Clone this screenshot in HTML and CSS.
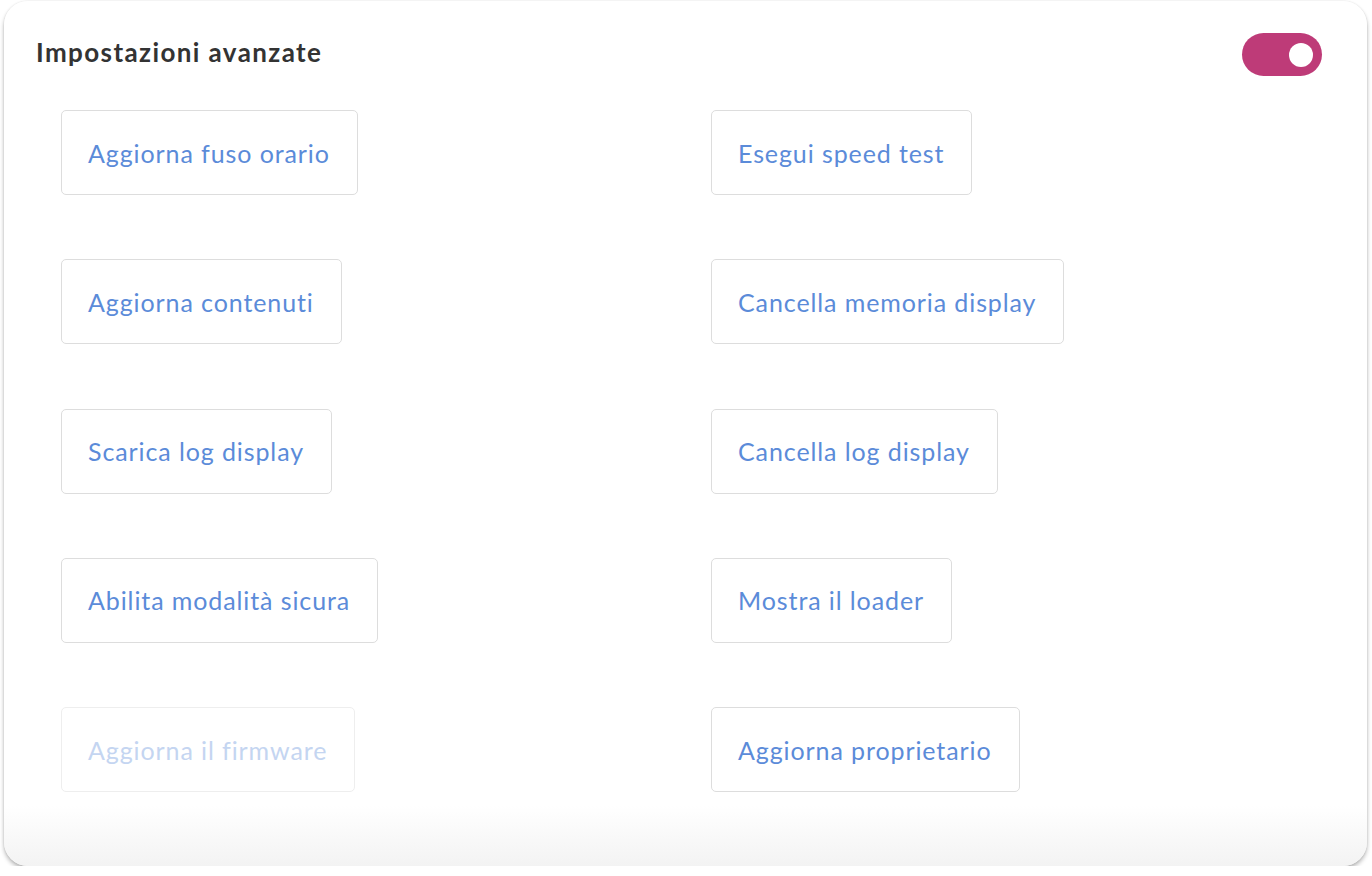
FILE: index.html
```html
<!DOCTYPE html>
<html lang="it">
<head>
<meta charset="utf-8">
<title>Impostazioni avanzate</title>
<link rel="stylesheet" href="styles.css">
</head>
<body>
<section class="card">
  <header class="card-header">
    <h2 class="title">Impostazioni avanzate</h2>
    <button class="toggle on" aria-label="Attiva"><span class="knob"></span></button>
  </header>
  <div class="actions">
    <div class="cell"><button class="action">Aggiorna fuso orario</button></div>
    <div class="cell"><button class="action">Esegui speed test</button></div>
    <div class="cell"><button class="action">Aggiorna contenuti</button></div>
    <div class="cell"><button class="action">Cancella memoria display</button></div>
    <div class="cell"><button class="action">Scarica log display</button></div>
    <div class="cell"><button class="action">Cancella log display</button></div>
    <div class="cell"><button class="action">Abilita modalità sicura</button></div>
    <div class="cell"><button class="action">Mostra il loader</button></div>
    <div class="cell"><button class="action disabled" disabled>Aggiorna il firmware</button></div>
    <div class="cell"><button class="action">Aggiorna proprietario</button></div>
  </div>
</section>
</body>
</html>
```
FILE: styles.css
```css
html, body {
  margin: 0;
  padding: 0;
  background: #ffffff;
}
body {
  font-family: "Lato", "Liberation Sans", sans-serif;
  padding: 1px 5px 0 4px;
}
.card {
  height: 865px;
  box-sizing: border-box;
  border-radius: 24px;
  background: linear-gradient(to bottom, #ffffff 0%, #ffffff 93%, #f3f3f3 100%);
  box-shadow: 0 3px 4px rgba(0, 0, 0, 0.28), 0 0 2px rgba(0, 0, 0, 0.12);
  padding: 32px 45px 0 32px;
}
.card-header {
  display: flex;
  justify-content: space-between;
  align-items: center;
  height: 43px;
}
.title {
  margin: 0;
  font-size: 26px;
  font-weight: 700;
  color: #333333;
  letter-spacing: 1.4px;
  line-height: 1;
  position: relative;
  top: -3px;
}
.toggle {
  width: 80px;
  height: 43px;
  border: none;
  border-radius: 22px;
  background: #be3b78;
  padding: 0 9px 0 0;
  display: flex;
  justify-content: flex-end;
  align-items: center;
  cursor: pointer;
}
.knob {
  width: 24px;
  height: 24px;
  border-radius: 50%;
  background: #ffffff;
}
.actions {
  margin-top: 34px;
  margin-left: 25px;
  display: grid;
  grid-template-columns: 650px 1fr;
  row-gap: 64.25px;
}
.cell {
  display: flex;
}
.action {
  height: 85px;
  padding: 0 27px 0 26px;
  background: #ffffff;
  border: 1px solid #dddddd;
  border-radius: 5px;
  font-family: "Lato", "Liberation Sans", sans-serif;
  font-size: 25px;
  font-weight: 400;
  color: #5b8bd9;
  letter-spacing: 0.9px;
  cursor: pointer;
}
.action.disabled {
  color: #c4d5f1;
  border-color: #eeeeee;
  cursor: default;
}
```
